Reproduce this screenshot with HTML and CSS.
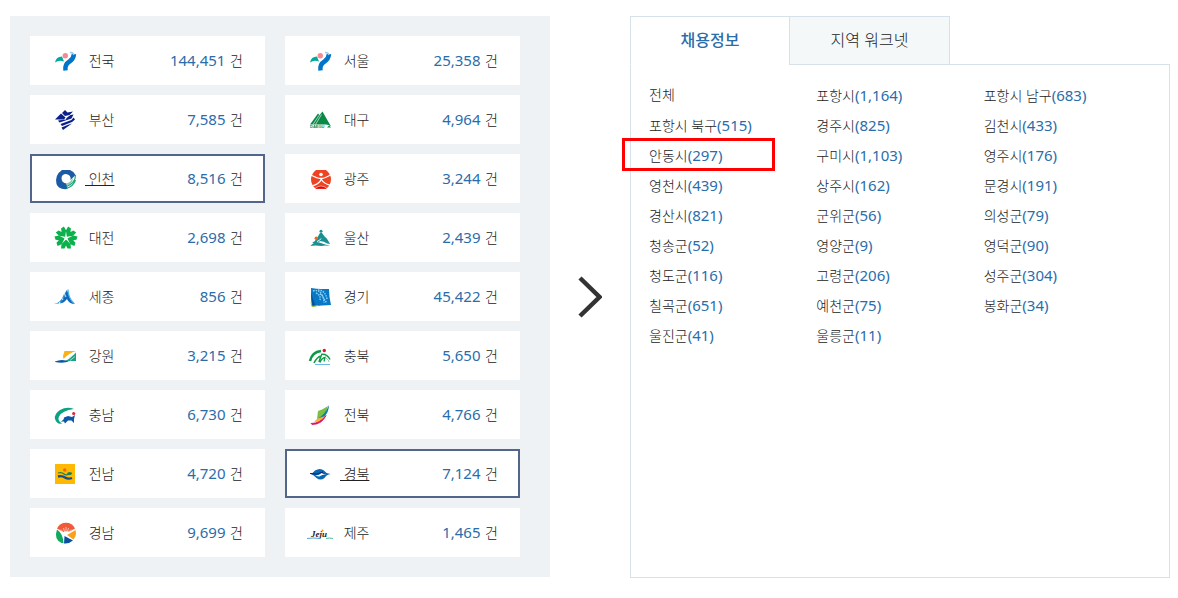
FILE: index.html
```html
<!DOCTYPE html>
<html lang="ko">
<head>
    <meta charset="UTF-8">
    <meta name="viewport" content="width=device-width, initial-scale=1.0">
    <title>지역별 채용정보</title>
    <link rel="stylesheet" href="styles.css">
</head>
<body>

    <main class="container">

        <!-- Region list -->
        <nav class="region-list">
            <a class="region" href="#">
                <svg class="logo" viewBox="0 0 26 25">
                    <path d="M3 14.500 Q4 8.500 10 8.500 L12 13.500 Q7 11.500 3 14.500z" fill="#00a99a"/>
                    <circle cx="13.300" cy="7.700" r="2.700" fill="#f48b94"/>
                    <path d="M22 6 Q21.500 11 17.500 13.500 Q12.500 16.500 13.500 22.500" fill="none" stroke="#0074c8" stroke-width="4.500"/>
                    <path d="M18 4.500 Q21 4 22 7" fill="none" stroke="#9cc9e8" stroke-width="1.500"/>
                </svg>
                <span class="name">&nbsp;전국</span>
                <span class="count"><em>144,451</em> 건</span>
            </a>
            <a class="region" href="#">
                <svg class="logo" viewBox="0 0 26 25">
                    <path d="M3 14.500 Q4 8.500 10 8.500 L12 13.500 Q7 11.500 3 14.500z" fill="#00a99a"/>
                    <circle cx="13.300" cy="7.700" r="2.700" fill="#f48b94"/>
                    <path d="M22 6 Q21.500 11 17.500 13.500 Q12.500 16.500 13.500 22.500" fill="none" stroke="#0074c8" stroke-width="4.500"/>
                    <path d="M18 4.500 Q21 4 22 7" fill="none" stroke="#9cc9e8" stroke-width="1.500"/>
                </svg>
                <span class="name">&nbsp;서울</span>
                <span class="count"><em>25,358</em> 건</span>
            </a>
            <a class="region" href="#">
                <svg class="logo" viewBox="0 0 26 25">
                    <g fill="#0b1f8a">
                        <path d="M13 3l2.500 2.500 5.500 -1 -3.500 3.500 -4.500 1 -3 -3z"/>
                        <path d="M3 12.500l6 -6 4.500 4 -1.500 2z"/>
                        <path d="M14.500 11l4 -3 3 -.500 -2 4 -12 4 -1.500 -2 8 -1z"/>
                        <path d="M21.500 10.500l1.500 2 -3 2.500 -10 4 -1.500 -2 11 -4z"/>
                        <path d="M20 16.500l-9 6.500 -1.500 -2.500 6 -2.500z"/>
                    </g>
                </svg>
                <span class="name">&nbsp;부산</span>
                <span class="count"><em>7,585</em> 건</span>
            </a>
            <a class="region" href="#">
                <svg class="logo" viewBox="0 0 26 25">
                    <path d="M3 17.500 L11 6.500 12.500 8 15.500 4.500 24 19.500 Q21 17 18 17.500z" fill="#0b8a47"/>
                    <path d="M6 17.500l7 -10.500 M8.500 17.500l6 -10" stroke="#fff" stroke-width="0.600"/>
                    <path d="M20 20.500h4l-2 -2z" fill="#0b8a47"/>
                    <text class="logo-text" x="3" y="21" font-size="4" fill="#0b8a47">DAEGU</text>
                </svg>
                <span class="name">&nbsp;대구</span>
                <span class="count"><em>4,964</em> 건</span>
            </a>
            <a class="region selected" href="#">
                <svg class="logo" viewBox="0 0 26 25">
                    <path d="M10 4h8q4 1.500 5.500 5l-5 5q1 -5 -4.500 -6 -4.500 0 -4.500 4.500 .500 4.500 5 5l1 5.500q-9 1 -11 -5 -2 -9 5.500 -14z" fill="#1c5aa6"/>
                    <path d="M14 17.500q5 -1 6.500 -6 1.500 5 -5.500 8z" fill="#8cc9b0"/>
                    <path d="M23.500 9q0 8 -9 11.500 M23.500 14q-2 6 -9 8.500" fill="none" stroke="#1fa57a" stroke-width="1.200"/>
                </svg>
                <span class="name">&nbsp;인천</span>
                <span class="count"><em>8,516</em> 건</span>
            </a>
            <a class="region" href="#">
                <svg class="logo" viewBox="0 0 26 25">
                    <path d="M9 4h10q5 4 5 9.500t-5 9.500h-10q-5 -4 -5 -9.500t5 -9.500z" fill="#ee4423"/>
                    <circle cx="14" cy="8.500" r="1.800" fill="#fff"/>
                    <path d="M4 9q6 3.500 10 3.500t10 -4 M4 20q8 -1 11 -8 M14 13q3 5 10 6.500" fill="none" stroke="#fff" stroke-width="1.300"/>
                    <path d="M8 22.500q6 -5 12 0" fill="#e60012" stroke="#fff" stroke-width="0.500"/>
                </svg>
                <span class="name">&nbsp;광주</span>
                <span class="count"><em>3,244</em> 건</span>
            </a>
            <a class="region" href="#">
                <svg class="logo" viewBox="0 0 26 25">
                    <!-- five leaves, open at the top -->
                    <g fill="#0bb14b">
                        <path id="leaf" d="M14 14.500l4.500 4.500 .500 4.500 -3.500 0 -1.500 -3 -1.500 3 -3.500 0 .500 -4.500z"/>
                        <use href="#leaf" transform="rotate(72 14 13)"/>
                        <use href="#leaf" transform="rotate(144 14 13)"/>
                        <use href="#leaf" transform="rotate(216 14 13)"/>
                        <use href="#leaf" transform="rotate(288 14 13)"/>
                    </g>
                </svg>
                <span class="name">&nbsp;대전</span>
                <span class="count"><em>2,698</em> 건</span>
            </a>
            <a class="region" href="#">
                <svg class="logo" viewBox="0 0 26 25">
                    <path d="M13 8l-3 5q-2 4 -5 5 6 .500 8 -2 4 0 7 2.500l3 .500q-3 -6 -5 -7l-3 -4z" fill="#1a9092"/>
                    <path d="M10 16.500q3 -1 4 -3" fill="none" stroke="#fff" stroke-width="1"/>
                    <circle cx="14" cy="6.300" r="1.500" fill="#1a9092"/>
                    <path d="M3.300 21q4 -5 9 -3.500t11 3.500q-5 -1 -9 0 -6 -1 -11 0z" fill="#1a9092"/>
                    <circle cx="9.300" cy="13.300" r="1.700" fill="#f26522"/>
                </svg>
                <span class="name">&nbsp;울산</span>
                <span class="count"><em>2,439</em> 건</span>
            </a>
            <a class="region" href="#">
                <svg class="logo" viewBox="0 0 26 25">
                    <path d="M2 20q7 -1 10 -10l3 -4v6q-3 8 -13 8z" fill="#2a8fd8"/>
                    <path d="M15 6l1.500 4q1 6 6.500 10 -6 0 -8 -5 -3 4 -7 4.500 5 -5 7 -13.500z" fill="#1167b8"/>
                    <path d="M16 5.500q0 8 6 14" fill="none" stroke="#43b4ee" stroke-width="1.200"/>
                    <path d="M6 17l2 2 M9 13l2 3 M12 9l2 4" stroke="#fff" stroke-width="0.800"/>
                </svg>
                <span class="name">&nbsp;세종</span>
                <span class="count"><em>856</em> 건</span>
            </a>
            <a class="region" href="#">
                <svg class="logo" viewBox="0 0 26 25">
                    <path d="M4 4q6 1 10 1t8 0q0 8 2 16 -9 0 -19 1.500 -1 -9 -1 -18.500z" fill="#0877c4"/>
                    <path d="M4 7q2 10 5 15l-4 .500q-1 -7 -1 -15.500z" fill="#04549b"/>
                    <path d="M4 18l1 4.500 6 -1" fill="none" stroke="#9dcb3b" stroke-width="1"/>
                    <g fill="none" stroke="#86d1f7" stroke-dasharray="1.500 1">
                        <path d="M6 7q6 -2 9 4t5 8" stroke-width="1.500"/>
                        <path d="M11 6q7 0 9 9 M9 9q5 2 4 7 M13 10q4 1 4 9" stroke-width="1.500"/>
                    </g>
                </svg>
                <span class="name">&nbsp;경기</span>
                <span class="count"><em>45,422</em> 건</span>
            </a>
            <a class="region" href="#">
                <svg class="logo" viewBox="0 0 26 25">
                    <path d="M12.500 8h11.500q-7 2 -12.500 8l-.500 -3z" fill="#fbb017"/>
                    <path d="M24 9.500v8.500h-11q5 -2 11 -8.500z" fill="#12a58c"/>
                    <path d="M17 15l4 -3 M18 17.500l5 -4" stroke="#c7e6d8" stroke-width="0.800"/>
                    <path d="M3 18.500q7 -3 14 0 -6 2 -14 .500z" fill="#0b55a5"/>
                </svg>
                <span class="name">&nbsp;강원</span>
                <span class="count"><em>3,215</em> 건</span>
            </a>
            <a class="region" href="#">
                <svg class="logo" viewBox="0 0 26 25">
                    <circle cx="17.300" cy="7.500" r="1.700" fill="#e8112d"/>
                    <path d="M3 18q2 -9 11 -10" fill="none" stroke="#0d9a48" stroke-width="2.600"/>
                    <path d="M7 20q3 -6 7 -7l-2 6" fill="none" stroke="#0d9a48" stroke-width="1.600"/>
                    <path d="M13 19.500q1 -4 5 -5l-1 4" fill="none" stroke="#0d9a48" stroke-width="1.300"/>
                    <path d="M14 11.500q6 -1 9 5" fill="none" stroke="#0d9a48" stroke-width="1.500"/>
                    <path d="M19 15q3 2 3 4" fill="none" stroke="#8ed0a7" stroke-width="1"/>
                    <path d="M8 21.500h15" stroke="#6fb9e6" stroke-width="1"/>
                </svg>
                <span class="name">&nbsp;충북</span>
                <span class="count"><em>5,650</em> 건</span>
            </a>
            <a class="region" href="#">
                <svg class="logo" viewBox="0 0 26 25">
                    <path d="M22 7q-7 -3 -14 1 -6 4 -5 9 2 6 7 4.500 -5 -3 -3 -7 3 -6 15 -7.500z" fill="#0aa284"/>
                    <path d="M8 19.500q4 -1 4 -4l4 -1.500 4 1 3 -2 -1 4v4l-2.500 -2.500 -3.500 0 -3 3 -1 -2z" fill="#0c56a8"/>
                    <circle cx="21.700" cy="11.500" r="1.600" fill="#e8212f"/>
                </svg>
                <span class="name">&nbsp;충남</span>
                <span class="count"><em>6,730</em> 건</span>
            </a>
            <a class="region" href="#">
                <svg class="logo" viewBox="0 0 26 25">
                    <path d="M11 9q4 -1 10 -5l-3 10 -8 3z" fill="#7ac143"/>
                    <path d="M22 3q0 7 -5 12l-7 2q8 -4 12 -14z" fill="#0f7fa8"/>
                    <path d="M10 17l8 -3q-4 6 -11 6z" fill="#fbb034"/>
                    <path d="M4 21.500q9 0 15 -8 -4 9 -14 9z" fill="#d4145a" stroke="#d4145a" stroke-width="0.800"/>
                </svg>
                <span class="name">&nbsp;전북</span>
                <span class="count"><em>4,766</em> 건</span>
            </a>
            <a class="region" href="#">
                <svg class="logo" viewBox="0 0 26 25">
                    <path d="M3 3h20v20h-20z" fill="#ffb900"/>
                    <circle cx="12.700" cy="9" r="1.700" fill="#f26522"/>
                    <path d="M6 12q4 -1 6 1t8 -1" fill="none" stroke="#1d7f57" stroke-width="1.200"/>
                    <ellipse cx="17.500" cy="12.500" rx="2.200" ry="1.500" fill="#1d7f57"/>
                    <path d="M6 15.500q4 -1 7 1t7 .500" fill="none" stroke="#174c86" stroke-width="2.400"/>
                </svg>
                <span class="name">&nbsp;전남</span>
                <span class="count"><em>4,720</em> 건</span>
            </a>
            <a class="region selected" href="#">
                <svg class="logo" viewBox="0 0 26 25">
                    <path d="M3 12.500q3 0 5 -3 5 -3 9 0 2 3 6.500 3.500 -4 .500 -6 4 -4 3 -8 0 -3 -3.500 -6.500 -4.500z" fill="#0a68b0"/>
                    <path d="M8 14.500q4 0 6.500 -2.500 2 1.500 5 1.500 -5 0 -7 2 -2 0 -4.500 -1z" fill="#fff"/>
                    <path d="M3 12.500q7 2 13 -1.500" fill="none" stroke="#0c2074" stroke-width="1"/>
                </svg>
                <span class="name">&nbsp;경북</span>
                <span class="count"><em>7,124</em> 건</span>
            </a>
            <a class="region" href="#">
                <svg class="logo" viewBox="0 0 26 25">
                    <path d="M14 13.500L5 8.500a10 10 0 0 1 18 0z" fill="#f15a38"/>
                    <path d="M5 9.500q6 4 6.500 13.500h-2q-8 -4 -4.500 -13.500z" fill="#12a85f"/>
                    <path d="M12.500 16l-.500 7.500q5 .500 9 -3z" fill="#0a50a1"/>
                    <path d="M15 15l6.500 4.500q3.500 -4 2 -9.500z" fill="#f9a11b"/>
                    <path d="M12 13L9 9.500 M13 13l-1.500 -5 M14 13V7 M15 13l1.500 -5 M16 13l3 -3.500" stroke="#fff" stroke-width="0.600"/>
                    <path d="M9.500 13.500q4.500 -4 9 -1l-5 3z" fill="#fff"/>
                </svg>
                <span class="name">&nbsp;경남</span>
                <span class="count"><em>9,699</em> 건</span>
            </a>
            <a class="region" href="#">
                <svg class="logo" viewBox="0 0 26 25">
                    <text class="logo-text script" x="4" y="17" font-size="9" fill="#222">Jeju</text>
                    <circle cx="15.500" cy="10.500" r="1" fill="#f7931e"/>
                    <path d="M0 18.500q6 -1 13 0" fill="none" stroke="#5ba4d9" stroke-width="1.200"/>
                    <path d="M19 18.500q3 -1 7 0" fill="none" stroke="#55bfa0" stroke-width="1.200"/>
                </svg>
                <span class="name">&nbsp;제주</span>
                <span class="count"><em>1,465</em> 건</span>
            </a>
        </nav>

        <div class="arrow">
            <svg width="24" height="42" viewBox="0 0 24 42">
                <path d="M2 2L21.500 21L2 40" fill="none" stroke="#333" stroke-width="4.500"/>
            </svg>
        </div>

        <!-- City list of the selected region -->
        <section class="detail">
            <div class="tabs">
                <button type="button" class="tab active">채용정보</button>
                <button type="button" class="tab">지역 워크넷</button>
            </div>
            <ul class="city-list">
                <li><a href="#">전체</a></li>
                <li><a href="#">포항시<em>(1,164)</em></a></li>
                <li><a href="#">포항시 남구<em>(683)</em></a></li>
                <li><a href="#">포항시 북구<em>(515)</em></a></li>
                <li><a href="#">경주시<em>(825)</em></a></li>
                <li><a href="#">김천시<em>(433)</em></a></li>
                <li class="marked"><a href="#">안동시<em>(297)</em></a></li>
                <li><a href="#">구미시<em>(1,103)</em></a></li>
                <li><a href="#">영주시<em>(176)</em></a></li>
                <li><a href="#">영천시<em>(439)</em></a></li>
                <li><a href="#">상주시<em>(162)</em></a></li>
                <li><a href="#">문경시<em>(191)</em></a></li>
                <li><a href="#">경산시<em>(821)</em></a></li>
                <li><a href="#">군위군<em>(56)</em></a></li>
                <li><a href="#">의성군<em>(79)</em></a></li>
                <li><a href="#">청송군<em>(52)</em></a></li>
                <li><a href="#">영양군<em>(9)</em></a></li>
                <li><a href="#">영덕군<em>(90)</em></a></li>
                <li><a href="#">청도군<em>(116)</em></a></li>
                <li><a href="#">고령군<em>(206)</em></a></li>
                <li><a href="#">성주군<em>(304)</em></a></li>
                <li><a href="#">칠곡군<em>(651)</em></a></li>
                <li><a href="#">예천군<em>(75)</em></a></li>
                <li><a href="#">봉화군<em>(34)</em></a></li>
                <li><a href="#">울진군<em>(41)</em></a></li>
                <li><a href="#">울릉군<em>(11)</em></a></li>
            </ul>
        </section>

    </main>

</body>
</html>
```

FILE: styles.css
```css
* {
    box-sizing: border-box;
}
body {
    margin: 0;
    background-color: #fff;
    color: #222;
    font-family: "Noto Sans", "Noto Sans CJK KR", sans-serif;
    font-size: 14px;
    font-weight: 300;
    line-height: 20px;
}
a {
    color: inherit;
    text-decoration: none;
}
em {
    font-style: normal;
    font-size: 15px;
    font-weight: 400;
    color: #2a6dab;
}
.container {
    display: grid;
    grid-template-columns: 1fr 80px 1fr;
    align-items: start;
    padding: 16px 8px 16px 10px;
}

/* Region list */
.region-list {
    display: grid;
    grid-template-columns: 1fr 1fr;
    gap: 10px 20px;
    padding: 20px 30px 20px 20px;
    background-color: #eef2f5;
}
.region {
    display: flex;
    align-items: center;
    padding: 10px 20px;
    border: 2px solid #fff;
    background-color: #fff;
}
.region.selected {
    border-color: #53658b;
}
.region.selected .name {
    text-decoration: underline;
    text-underline-offset: 1px;
}
.logo {
    width: 26px;
    height: 25px;
    margin-right: 7px;
}
.logo-text {
    font-family: "Liberation Sans", sans-serif;
    font-weight: bold;
}
.logo-text.script {
    font-family: "Liberation Serif", serif;
    font-style: italic;
}
.count {
    margin-left: auto;
}
.count em {
    margin-right: 1px;
}

/* Arrow */
.arrow {
    display: flex;
    align-items: center;
    justify-content: center;
    align-self: stretch;
}

/* Tabs and city list */
.tabs {
    display: flex;
}
.tab {
    position: relative;
    width: 161px;
    margin: 0 0 -1px -1px;
    padding: 12px 0;
    border: 1px solid #d7e1e9;
    background-color: #f4f8f9;
    color: #222;
    font-family: inherit;
    font-size: 16px;
    font-weight: 300;
    line-height: 23px;
    cursor: pointer;
}
.tab.active {
    width: 160px;
    margin-left: 0;
    border-bottom-color: #fff;
    background-color: #fff;
    color: #2a6dab;
    font-weight: 500;
}
.city-list {
    display: grid;
    grid-template-columns: repeat(3, 1fr);
    align-content: start;
    min-height: 514px;
    margin: 0;
    padding: 15px 18px;
    border: 1px solid #d7e1e9;
    list-style: none;
    line-height: 30px;
}
.city-list li {
    position: relative;
    height: 30px;
}
.marked::after {
    content: "";
    position: absolute;
    top: -2px;
    left: -27px;
    box-sizing: border-box;
    width: 153px;
    height: 33px;
    border: 3px solid #f00;
    pointer-events: none;
}
```
